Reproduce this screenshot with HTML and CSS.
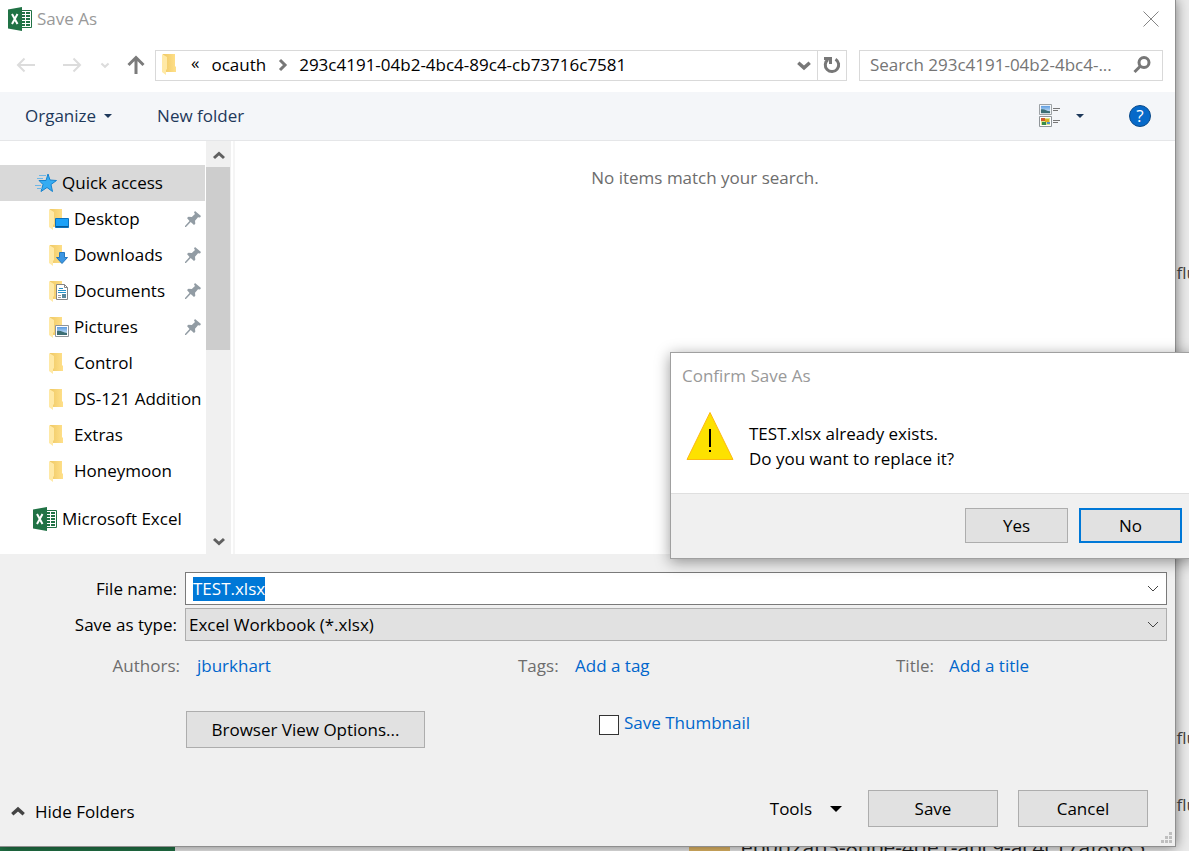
FILE: index.html
```html
<!DOCTYPE html>
<html lang="en">
<head>
  <meta charset="UTF-8">
  <meta name="viewport" content="width=device-width, initial-scale=1.0">
  <title>Save As</title>
  <link rel="stylesheet" href="styles.css">
</head>
<body>
  <!-- Shared icons -->
  <svg class="sprite" aria-hidden="true">
    <linearGradient id="fold-back" x1="0" x2="1"><stop offset="0" stop-color="#efc965"/><stop offset="1" stop-color="#ffe08a"/></linearGradient>
    <linearGradient id="sky" x1="0" y1="0" x2="0" y2="1"><stop offset="0" stop-color="#5b9be0"/><stop offset="1" stop-color="#e4f2fb"/></linearGradient>
    <symbol id="folder" viewBox="0 0 20 24">
      <path d="M1 2h12v12l1 1v5H1z" fill="url(#fold-back)"/>
      <path d="M0 2l5 3v12l-1 1v5l-4-3z" fill="#ffe9a6"/>
    </symbol>
    <symbol id="excel" viewBox="0 0 24 24">
      <path d="M12 3.500h11.500v17H12z" fill="#fff" stroke="#207245"/>
      <path d="M14 6h3M14 9h3M14 12h3M14 15h3M14 18h3M18 6h4M18 9h4M18 12h4M18 15h4M18 18h4" stroke="#207245" stroke-width="2"/>
      <path d="M0 2.500L14 0v24L0 21.500z" fill="#207245"/>
      <path d="M4 7l5.500 10M9.500 7L4 17" stroke="#fff" stroke-width="2"/>
    </symbol>
    <symbol id="pin" viewBox="0 0 16 16">
      <path d="M10 0l6 5-1 1.500-2-.3-3 3.600.3 3L9 14l-3.300-3L1 16H0v-1l4.500-5L2 7l1.500-1.300 3.300.3L10 3 9 1.500z" fill="#929ca4"/>
    </symbol>
    <symbol id="chev" viewBox="0 0 14 14">
      <path d="M2 5l5 4.500L12 5" fill="none" stroke="currentColor" stroke-width="3"/>
    </symbol>
    <symbol id="photo" viewBox="0 0 14 12">
      <path d="M.5.5h13v11H.5z" fill="#fff" stroke="#8f9599"/>
      <path d="M2 2h10v8H2z" fill="url(#sky)"/>
      <path d="M2 6c4-1 6 2 10 2v2H2z" fill="#3c6e74"/>
    </symbol>
  </svg>

  <!-- Window behind the dialogs -->
  <div class="backdrop" aria-hidden="true">
    <span class="cell cell-a">nflu</span>
    <span class="cell cell-b">nflu</span>
    <span class="cell cell-c">nflu</span>
    <div class="nav-strip"></div>
    <div class="folder-strip"></div>
    <span class="folder-name">ep0b2ab3-8bbe-4de1-abc9-ac4c17af8685</span>
  </div>

  <main class="dialog">
    <header class="title-bar">
      <svg class="icon-24"><use href="#excel"/></svg>
      <h1>Save As</h1>
      <button class="close" aria-label="Close">
        <svg width="16" height="16" viewBox="0 0 16 16"><path d="M.5.5l15 15M15.500.5l-15 15" stroke="#858585"/></svg>
      </button>
    </header>

    <div class="address-row">
      <button class="nav back" aria-label="Back"><svg width="20" height="16" viewBox="0 0 20 16"><path d="M19 8H2M8.500 1.500L2 8l6.500 6.500" fill="none" stroke="#dcdcdc" stroke-width="2"/></svg></button>
      <button class="nav forward" aria-label="Forward"><svg width="20" height="16" viewBox="0 0 20 16"><path d="M1 8h17M11.500 1.500L18 8l-6.500 6.500" fill="none" stroke="#dcdcdc" stroke-width="2"/></svg></button>
      <button class="nav recent" aria-label="Recent locations"><svg width="10" height="10"><use href="#chev"/></svg></button>
      <button class="nav up" aria-label="Up"><svg width="18" height="20" viewBox="0 0 18 20"><path d="M9 19V3M1.500 10L9 2.500l7.500 7.500" fill="none" stroke="#7b7b7b" stroke-width="3"/></svg></button>
      <div class="address">
        <svg class="address-folder"><use href="#folder"/></svg>
        <span class="overflow">«</span>
        <a href="#">ocauth</a>
        <svg class="crumb-arrow" width="10" height="14" viewBox="0 0 10 14"><path d="M2 2l5 5-5 5" fill="none" stroke="#777" stroke-width="3"/></svg>
        <a href="#">293c4191-04b2-4bc4-89c4-cb73716c7581</a>
        <button class="drop" aria-label="Previous locations"><svg width="16" height="16"><use href="#chev"/></svg></button>
        <button class="refresh" aria-label="Refresh"><svg width="18" height="18" viewBox="0 0 18 18"><path d="M12.500 3.200a6.700 6.700 0 1 1-7.500.3" fill="none" stroke="#777" stroke-width="3"/><path d="M1 1h8v7H6V4H1z" fill="#777"/></svg></button>
      </div>
      <div class="search">
        <input type="text" aria-label="Search" placeholder="Search 293c4191-04b2-4bc4-...">
        <svg width="18" height="18" viewBox="0 0 18 18"><circle cx="11" cy="6.500" r="5" fill="none" stroke="#777" stroke-width="3"/><path d="M7.500 10L1.500 16" stroke="#777" stroke-width="3"/></svg>
      </div>
    </div>

    <div class="toolbar">
      <button class="organize">Organize <i class="caret"></i></button>
      <button>New folder</button>
      <button class="view" aria-label="Change your view">
        <svg width="22" height="24" viewBox="0 0 22 24">
          <use href="#photo" width="13" height="11"/>
          <path d="M.5 12.500h12v10H.5z" fill="#fff" stroke="#8f9599"/>
          <path d="M2 14h9v7H2z" fill="#d8e48a"/><path d="M2 14h4v3H2z" fill="#cf5a2c"/><path d="M3 18h4v3H3z" fill="#378a4b"/><path d="M6 15h4v3H6z" fill="#ddb022"/><path d="M8 18h3v2H8z" fill="#5191c8"/>
          <path d="M14 4.500h7M14 6.500h5M14 16.500h7M14 18.500h5" stroke="#777"/>
        </svg>
        <i class="caret"></i>
      </button>
      <button class="help" aria-label="Help">?</button>
    </div>

    <div class="browser">
      <nav class="tree">
        <a class="item selected" href="#"><svg width="24" height="20" viewBox="0 0 24 20"><path d="M13 1l2 6 6.500.5-5.500 4 1.500 7-5.500-4-6 4 2-7-4-4h7z" fill="#35acf2" stroke="#1683cf"/><path d="M4 2.500h7M2 5.500h6M0 12.500h6M2 15.500h5" stroke="#6db6e6"/></svg>Quick access</a>
        <a class="item child" href="#"><svg class="folder"><use href="#folder"/><path d="M6.500 11.500h13v9h-13z" fill="#1ba1f8" stroke="#0b72bd"/><path d="M7 19.500h12" stroke="#075a98"/></svg><span>Desktop</span><svg class="pin"><use href="#pin"/></svg></a>
        <a class="item child" href="#"><svg class="folder"><use href="#folder"/><path d="M10.500 9.500h5v5h3L13 20.500l-5.500-6h3z" fill="#3c96e2" stroke="#2678bf"/></svg><span>Downloads</span><svg class="pin"><use href="#pin"/></svg></a>
        <a class="item child" href="#"><svg class="folder"><use href="#folder"/><path d="M7.500 5.500h8l3 3v12h-11z" fill="#fff" stroke="#858585"/><path d="M15.500 5.500v3h3" fill="none" stroke="#858585"/><path d="M10 9.500h4M9 11.500h8M9 13.500h8" stroke="#2793c9"/><path d="M9 16.500h3M9 18.500h3" stroke="#999"/><path d="M13 15h4v4h-4z" fill="#58889c"/></svg><span>Documents</span><svg class="pin"><use href="#pin"/></svg></a>
        <a class="item child" href="#"><svg class="folder"><use href="#folder"/><use href="#photo" x="6" y="10" width="14" height="12"/></svg><span>Pictures</span><svg class="pin"><use href="#pin"/></svg></a>
        <a class="item child" href="#"><svg class="folder"><use href="#folder"/></svg><span>Control</span></a>
        <a class="item child" href="#"><svg class="folder"><use href="#folder"/></svg><span>DS-121 Addition</span></a>
        <a class="item child" href="#"><svg class="folder"><use href="#folder"/></svg><span>Extras</span></a>
        <a class="item child" href="#"><svg class="folder"><use href="#folder"/></svg><span>Honeymoon</span></a>
        <a class="item app" href="#"><svg class="icon-24"><use href="#excel"/></svg>Microsoft Excel</a>
      </nav>
      <div class="scrollbar">
        <button class="scroll-up" aria-label="Scroll up"><svg width="14" height="14"><use href="#chev"/></svg></button>
        <div class="thumb"></div>
        <button aria-label="Scroll down"><svg width="14" height="14"><use href="#chev"/></svg></button>
      </div>
      <section class="files">
        <p>No items match your search.</p>
      </section>
    </div>

    <form class="details">
      <div class="field">
        <label for="file-name">File name:</label>
        <div class="combo">
          <input type="text" id="file-name" value="TEST.xlsx">
          <svg width="12" height="8" viewBox="0 0 12 8"><path d="M1 1l5 5 5-5" fill="none" stroke="#444"/></svg>
        </div>
      </div>
      <div class="field">
        <label for="file-type">Save as type:</label>
        <div class="combo type">
          <select id="file-type"><option>Excel Workbook (*.xlsx)</option></select>
          <svg width="12" height="8" viewBox="0 0 12 8"><path d="M1 1l5 5 5-5" fill="none" stroke="#444"/></svg>
        </div>
      </div>
      <div class="meta">
        <span>Authors:</span><a href="#">jburkhart</a>
        <span>Tags:</span><a href="#">Add a tag</a>
        <span>Title:</span><a href="#">Add a title</a>
      </div>
      <div class="options">
        <button type="button" class="btn">Browser View Options...</button>
        <label class="thumbnail"><input type="checkbox">Save Thumbnail</label>
      </div>
      <footer class="footer">
        <button type="button" class="hide-folders"><svg width="16" height="16"><use href="#chev"/></svg>Hide Folders</button>
        <button type="button" class="tools">Tools <i class="caret"></i></button>
        <button type="button" class="btn">Save</button>
        <button type="button" class="btn">Cancel</button>
      </footer>
    </form>
    <svg class="grip" width="11" height="11" viewBox="0 0 11 11"><path d="M8 0h3v3H8zM8 4h3v3H8zM8 8h3v3H8zM4 4h3v3H4zM4 8h3v3H4zM0 8h3v3H0z" fill="#bfbfbf"/></svg>
  </main>

  <!-- Overwrite confirmation -->
  <div class="confirm" role="alertdialog" aria-labelledby="confirm-title">
    <h2 id="confirm-title">Confirm Save As</h2>
    <div class="message">
      <svg width="48" height="50" viewBox="0 0 48 50"><path d="M24 1.500L47 48.500H1z" fill="#fde100" stroke="#fdb913"/><path d="M24 18v18M24 39v2" stroke="#000" stroke-width="2"/></svg>
      <p>TEST.xlsx already exists.<br>Do you want to replace it?</p>
    </div>
    <div class="confirm-actions">
      <button class="btn">Yes</button>
      <button class="btn default">No</button>
    </div>
  </div>

  <script>
    // Preselect the suggested file name
    const fileName = document.getElementById("file-name");
    fileName.focus();
    fileName.select();
  </script>
</body>
</html>
```
FILE: styles.css
```css
* {
  box-sizing: border-box;
}

body {
  margin: 0;
  min-height: 100vh;
  overflow: hidden;
  position: relative;
  background: #ebebeb;
  color: #000;
  font-family: "Open Sans", "Segoe UI", sans-serif;
  font-size: 17px;
  line-height: 24px;
}

h1,
h2,
p {
  margin: 0;
  font-size: 17px;
  font-weight: normal;
}

a {
  color: inherit;
  text-decoration: none;
}

button,
input,
select {
  font: inherit;
  color: inherit;
}

button {
  border: none;
  padding: 0;
  background: none;
  white-space: nowrap;
}

svg {
  flex: none;
  display: block;
}

.sprite {
  position: absolute;
  width: 0;
  height: 0;
}

.icon-24 {
  width: 24px;
  height: 24px;
}

.caret {
  border: 4px solid transparent;
  border-top-color: currentColor;
  border-bottom: none;
}

/* Window behind */
.backdrop {
  position: absolute;
  inset: 0;
  overflow: hidden;
  color: #444;
}

.cell {
  position: absolute;
  left: calc(100% - 23px);
}

.cell-a {
  top: 261px;
}

.cell-b {
  top: 726px;
}

.cell-c {
  top: 793px;
}

.nav-strip {
  position: absolute;
  left: 0;
  bottom: 0;
  width: 175px;
  height: 20px;
  background: #217346;
}

.folder-strip {
  position: absolute;
  left: 689px;
  bottom: 0;
  width: 41px;
  height: 20px;
  background: #e2b866;
}

.folder-name {
  position: absolute;
  left: 741px;
  top: 835px;
  font-size: 21px;
  color: #222;
}

/* Save dialog */
.dialog {
  position: relative;
  margin-right: 13px;
  background: #fff;
  border: 1px solid #8f8f8f;
  border-width: 0 1px 1px 0;
  box-shadow: 0 0 12px rgba(0, 0, 0, 0.5);
}

.title-bar {
  display: flex;
  align-items: center;
  gap: 5px;
  height: 38px;
  padding: 0 16px 0 8px;
  color: #999;
}

.close {
  margin-left: auto;
}

.address-row {
  display: flex;
  align-items: center;
  height: 54px;
  padding: 0 12px 0 16px;
}

.nav {
  color: #dcdcdc;
}

.forward {
  margin-left: 26px;
}

.recent {
  margin-left: 18px;
}

.up {
  margin: 0 10px 0 17px;
}

.address,
.search {
  display: flex;
  align-items: center;
  height: 31px;
  border: 1px solid #d9d9d9;
  background: #fff;
}

.address {
  flex: 1;
  min-width: 0;
}

.address-folder {
  width: 20px;
  height: 24px;
  margin: 0 0 2px 6px;
}

.overflow {
  margin: 0 12px 4px 9px;
}

.crumb-arrow {
  margin: 0 11px 0 12px;
}

.drop {
  margin-left: auto;
  padding: 0 5px;
  color: #777;
}

.refresh {
  height: 29px;
  padding: 0 5px;
  border-left: 1px solid #d9d9d9;
}

.search {
  flex: 0 0 304px;
  margin-left: 12px;
  padding: 0 11px 0 10px;
}

.search input {
  flex: 1;
  min-width: 0;
  padding: 0;
  border: none;
  outline: none;
}

.search input::placeholder {
  color: #757575;
}

.toolbar {
  display: flex;
  align-items: center;
  height: 49px;
  padding: 0 24px 0 25px;
  background: #f4f6f9;
  border-bottom: 1px solid #e5e6e8;
  color: #1e395b;
}

.organize,
.view {
  display: flex;
  align-items: center;
}

.organize {
  gap: 8px;
  margin-right: 45px;
}

.view {
  gap: 15px;
  margin: 0 45px 0 auto;
}

.help {
  width: 22px;
  height: 22px;
  border: 1px solid #0a4a8a;
  border-radius: 50%;
  background: #0669c9;
  color: #fff;
  line-height: 20px;
}

/* Folder tree and file list */
.browser {
  display: flex;
}

.tree {
  width: 205px;
  padding: 24px 0 17px;
  overflow: hidden;
}

.item {
  display: flex;
  align-items: center;
  gap: 3px;
  height: 36px;
  padding-left: 35px;
  white-space: nowrap;
}

.selected {
  background: #d9d9d9;
}

.child {
  gap: 5px;
  padding-left: 49px;
}

.child span {
  flex: 1;
  min-width: 0;
  overflow: hidden;
}

.folder {
  width: 20px;
  height: 24px;
}

.pin {
  width: 16px;
  height: 16px;
  margin-right: 4px;
}

.app {
  gap: 5px;
  margin-top: 12px;
  padding-left: 33px;
}

.scrollbar {
  display: flex;
  flex-direction: column;
  width: 25px;
  margin-left: 1px;
  background: #f0f0f0;
  color: #606060;
}

.scrollbar button {
  display: flex;
  align-items: center;
  justify-content: center;
  height: 26px;
}

.scrollbar .scroll-up {
  padding-top: 4px;
}

.scroll-up svg,
.hide-folders svg {
  transform: rotate(180deg);
}

.thumb {
  width: 24px;
  height: 183px;
  margin-bottom: auto;
  background: #cdcdcd;
}

.files {
  flex: 1;
  margin-left: 2px;
  padding: 25px 0;
  border-left: 2px solid #f5f5f5;
  text-align: center;
  color: #6d6d6d;
}

/* File details */
.details {
  padding: 18px 8px 19px 0;
  background: #f0f0f0;
}

.field {
  display: flex;
  align-items: center;
  margin-bottom: 3px;
}

.field label {
  width: 177px;
  margin-right: 8px;
  text-align: right;
}

.combo {
  flex: 1;
  display: flex;
  align-items: center;
  height: 33px;
  padding-right: 7px;
  border: 1px solid #7a7a7a;
  background: #fff;
}

.combo input,
.combo select {
  flex: 1;
  min-width: 0;
  border: none;
  outline: none;
  background: none;
  appearance: none;
}

.combo input {
  padding: 0 7px;
}

.combo input::selection {
  background: #0078d7;
  color: #fff;
}

.type {
  border-color: #adadad;
  background: #e1e1e1;
}

.type select {
  padding: 0 3px;
}

.meta {
  display: grid;
  grid-template-columns: 180px 1fr 40px 1fr 36px 218px;
  column-gap: 17px;
  margin-top: 13px;
}

.meta span {
  color: #6d6d6d;
  text-align: right;
}

.meta a,
.thumbnail {
  color: #0066cc;
}

.options {
  display: flex;
  align-items: flex-start;
  gap: 174px;
  margin-top: 33px;
  padding-left: 186px;
}

.btn {
  width: 130px;
  height: 37px;
  border: 1px solid #adadad;
  background: #e1e1e1;
}

.options .btn {
  width: 239px;
}

.thumbnail {
  display: flex;
  align-items: center;
  gap: 5px;
}

.thumbnail input {
  appearance: none;
  width: 20px;
  height: 20px;
  margin: 4px 0 0;
  border: 1px solid #333;
  background: #fff;
}

.footer {
  display: flex;
  align-items: center;
  gap: 20px;
  margin-top: 42px;
  padding: 0 19px 0 10px;
}

.hide-folders,
.tools {
  display: flex;
  align-items: center;
}

.hide-folders {
  gap: 9px;
  margin: 6px auto 0 0;
}

.hide-folders svg {
  color: #444;
}

.tools {
  gap: 18px;
  margin-right: 6px;
}

.tools .caret {
  border-width: 6px 6px 0;
}

.grip {
  position: absolute;
  right: 3px;
  bottom: 3px;
}

/* Confirm popup */
.confirm {
  position: absolute;
  left: 670px;
  right: -6px;
  top: 352px;
  background: #fff;
  border: 1px solid #a0a0a0;
  box-shadow: 0 3px 14px rgba(0, 0, 0, 0.4);
}

.confirm h2 {
  padding: 11px 11px 0;
  color: #999;
}

.message {
  display: flex;
  align-items: flex-start;
  gap: 15px;
  padding: 23px 15px 22px;
}

.message p {
  padding-top: 10px;
  line-height: 25px;
}

.confirm-actions {
  display: flex;
  justify-content: flex-end;
  gap: 11px;
  padding: 14px 12px 15px;
  border-top: 1px solid #dfdfdf;
  background: #f0f0f0;
}

.confirm-actions .btn {
  width: 103px;
  height: 35px;
}

.confirm-actions .default {
  border: 2px solid #0078d7;
}
```
